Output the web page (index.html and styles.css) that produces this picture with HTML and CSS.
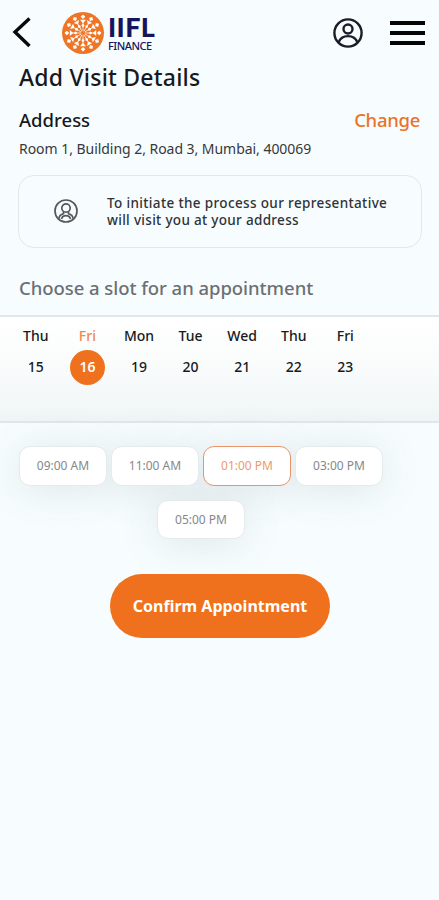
FILE: index.html
```html
<!DOCTYPE html>
<html lang="en">
<head>
<meta charset="utf-8">
<title>Add Visit Details</title>
<link rel="stylesheet" href="styles.css">
</head>
<body>
<header class="topbar">
  <svg class="back" width="20" height="34" viewBox="0 0 20 34"><path d="M17.500 4.500 3 18l14.500 14"/></svg>
  <div class="brand">
    <svg class="emblem" width="42" height="42" viewBox="-21 -21 42 42">
      <defs>
        <g id="ray">
          <path d="M0-2V-13" stroke="#fff" stroke-width=".7"/>
          <path d="M0-9.500 1.600-7.500 0-5.500-1.600-7.500ZM-3-13.200H3L0-9.800ZM0-18.500 2.300-16.200 0-13.900-2.300-16.200Z" fill="#fff"/>
        </g>
      </defs>
      <circle r="21" fill="#ee7526"/>
      <use href="#ray"/><use href="#ray" transform="rotate(30)"/><use href="#ray" transform="rotate(60)"/>
      <use href="#ray" transform="rotate(90)"/><use href="#ray" transform="rotate(120)"/><use href="#ray" transform="rotate(150)"/>
      <use href="#ray" transform="rotate(180)"/><use href="#ray" transform="rotate(210)"/><use href="#ray" transform="rotate(240)"/>
      <use href="#ray" transform="rotate(270)"/><use href="#ray" transform="rotate(300)"/><use href="#ray" transform="rotate(330)"/>
    </svg>
    <div class="wordmark"><span class="iifl">IIFL</span><span class="finance">FINANCE</span></div>
  </div>
  <svg class="user" width="32" height="32" viewBox="0 0 32 32"><circle cx="16" cy="16" r="13.600"/><circle cx="16" cy="12" r="4.500"/><path d="M6.500 25.500c3-8.500 16-8.500 19 0"/></svg>
  <div class="menu"><i></i><i></i><i></i></div>
</header>
<main>
  <h1>Add Visit Details</h1>
  <div class="address-row"><h2>Address</h2><a class="change">Change</a></div>
  <p class="address">Room 1, Building 2, Road 3, Mumbai, 400069</p>
  <section class="notice">
    <svg class="agent" width="26" height="26" viewBox="0 0 26 26"><circle cx="13" cy="13" r="11"/><circle cx="13" cy="10" r="4.200"/><path d="M10.500 13.500v2.200c-2.700.7-4.500 2.200-4.500 5M15.500 13.500v2.200c2.700.7 4.500 2.200 4.500 5M8.500 21c1-4.500 8-4.500 9 0"/></svg>
    <p><span class="line-one">To initiate the process our representative</span><br><span class="line-two">will visit you at your address</span></p>
  </section>
  <h3>Choose a slot for an appointment</h3>
  <section class="days">
    <div class="day"><span>Thu</span><b>15</b></div>
    <div class="day selected"><span>Fri</span><b>16</b></div>
    <div class="day"><span>Mon</span><b>19</b></div>
    <div class="day"><span>Tue</span><b>20</b></div>
    <div class="day"><span>Wed</span><b>21</b></div>
    <div class="day"><span>Thu</span><b>22</b></div>
    <div class="day"><span>Fri</span><b>23</b></div>
  </section>
  <section class="slots">
    <div class="slot">09:00 AM</div>
    <div class="slot">11:00 AM</div>
    <div class="slot active">01:00 PM</div>
    <div class="slot">03:00 PM</div>
    <div class="slot last">05:00 PM</div>
  </section>
  <button class="confirm">Confirm Appointment</button>
</main>
</body>
</html>
```
FILE: styles.css
```css
* { box-sizing: border-box; }
body { margin: 0; height: 900px; overflow: hidden; background: #f7fdff; color: #17191c; font-family: "Noto Sans", "Open Sans", sans-serif; }
h1, h2, h3, p { margin: 0; font-weight: 500; white-space: nowrap; }
svg { display: block; fill: none; }
.topbar { display: flex; align-items: center; height: 64px; padding: 2px 14px 0 12px; }
.back { stroke: #08090b; stroke-width: 3.4; margin-top: -4px; }
.brand { display: flex; align-items: center; gap: 4px; margin-left: 30px; }
.wordmark { display: flex; flex-direction: column; color: #17145c; height: 38px; width: 52px; white-space: nowrap; }
.iifl { font-family: Lato, sans-serif; font-size: 27px; line-height: 26px; height: 26px; font-weight: 900; letter-spacing: 0.4px; }
.finance { font-size: 11px; line-height: 12px; font-weight: 500; letter-spacing: -0.5px; }
.user { margin-left: auto; stroke: #1b1c29; stroke-width: 2.4; }
.menu { display: flex; flex-direction: column; gap: 6px; width: 35px; margin-left: 26px; }
.menu i { height: 4px; background: #050506; }
h1 { height: 27px; margin-left: 19px; font-size: 23px; line-height: 27px; letter-spacing: 0.22px; }
.address-row { display: flex; justify-content: space-between; height: 26px; margin: 16px 19px 0; line-height: 26px; }
h2, .change { font-size: 18.5px; line-height: 26px; font-weight: 500; }
.change { color: #e9732a; letter-spacing: -0.3px; }
.address { margin: 5px 0 0 19px; font-size: 14px; line-height: 21px; height: 20px; font-weight: 400; letter-spacing: -0.04px; color: #36383b; }
.notice { display: flex; align-items: center; height: 73px; margin: 17px 17px 0 18px; padding-left: 34px; border: 1.5px solid #e3e8ea; border-radius: 16px; }
.agent { stroke: #55575c; stroke-width: 1.7; margin-top: -2px; }
.notice p { margin-left: 28px; padding-top: 1px; font-size: 13.5px; line-height: 17px; color: #303236; }
.line-one { letter-spacing: 0.36px; }
.line-two { letter-spacing: 0.31px; }
h3 { margin: 27px 0 0 19px; font-size: 18.5px; line-height: 26px; letter-spacing: -0.05px; color: #6c7073; }
.days { display: flex; height: 108px; margin-top: 14px; padding: 10px 0 0 10px; border: solid #e1e7e9; border-width: 2px 0; background: linear-gradient(#fefffe, #fafcfc 45%, #eff5f6); }
.day { display: flex; flex-direction: column; align-items: center; width: 51.6px; font-size: 14px; font-weight: 500; line-height: 18px; }
.day b { display: grid; place-items: center; width: 35px; height: 35px; margin-top: 5px; padding-bottom: 1px; border-radius: 50%; font-weight: 500; }
.selected { color: #ee8a4c; }
.selected b { color: #fff; background: #ef711d; font-weight: 600; }
.slots { display: flex; flex-wrap: wrap; justify-content: center; gap: 14px 4px; width: 365px; margin: 23px 0 0 18.5px; isolation: isolate; }
.slot { position: relative; width: 88px; height: 40px; border: 1px solid #e5eaec; border-radius: 11px; background: #fefffe; color: #85888b; font-size: 12px; line-height: 38px; text-align: center; }
.slot::before { content: ""; position: absolute; inset: 0; z-index: -1; border-radius: 11px; box-shadow: 0 4px 40px rgba(70, 90, 95, .15); }
.slot.active { border: 1.5px solid #e99468; color: #ec9b6c; }
.slot.last { height: 39px; }
.confirm { display: block; position: relative; width: 220px; height: 64px; margin: 35px 0 0 110px; padding: 1px 0 0; border: 0; border-radius: 32px; background: #ef711d; color: #fff; font: 700 16px/63px "Noto Sans", sans-serif; white-space: nowrap; }
```
